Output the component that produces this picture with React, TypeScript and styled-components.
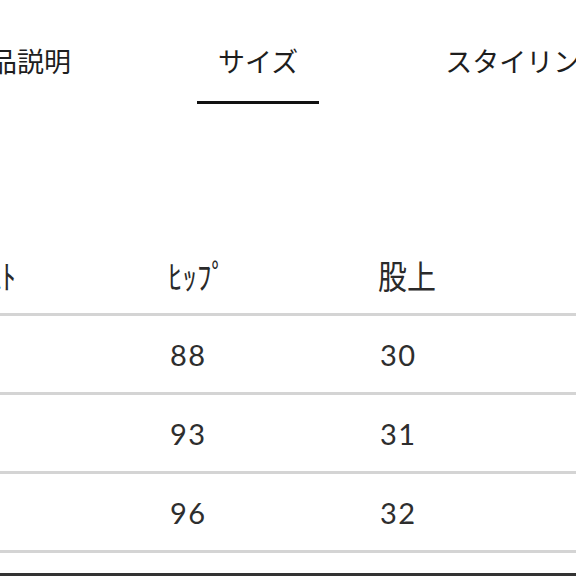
import React from 'react';
import styled, { createGlobalStyle } from 'styled-components';

const GlobalStyle = createGlobalStyle`
  html, body {
    margin: 0;
    padding: 0;
    background: #ffffff;
    overflow: hidden;
  }
  body {
    font-family: "Noto Sans CJK JP", "Noto Sans", sans-serif;
    color: #222;
  }
`;

const tabs = ['商品説明', 'サイズ', 'スタイリング'];

const headers = ['ｳｴｽﾄ', 'ﾋｯﾌﾟ', '股上'];

const rows = [
  ['64', '88', '30'],
  ['68', '93', '31'],
  ['72', '96', '32'],
];

function App() {
  return (
    <Page>
      <GlobalStyle />
      <TabBar>
        {tabs.map((t, i) => (
          <Tab key={t} active={i === 1}>{t}</Tab>
        ))}
      </TabBar>
      <SizeTable>
        <HeadRow>
          {headers.map(h => (
            <HeadCell key={h}>{h}</HeadCell>
          ))}
        </HeadRow>
        {rows.map((r, i) => (
          <Row key={i}>
            {r.map((v, j) => (
              <Cell key={j}>{v}</Cell>
            ))}
          </Row>
        ))}
      </SizeTable>
      <Footer />
    </Page>
  );
}

const Page = styled.div`
  width: 700px;
  margin-left: -42px;
  height: 576px;
  display: flex;
  flex-direction: column;
`;

const TabBar = styled.div`
  display: flex;
  gap: 105px;
  margin-left: -16px;
  white-space: nowrap;
`;

const Tab = styled.div<{ active?: boolean }>`
  font-size: 27px;
  line-height: 40px;
  padding: 41px 21px 20px;
  color: #1e1e1e;
  border-bottom: 3px solid ${p => (p.active ? '#111' : 'transparent')};
`;

const SizeTable = styled.div`
  margin-top: 132px;
  display: flex;
  flex-direction: column;
`;

const HeadRow = styled.div`
  display: grid;
  grid-template-columns: 210px 210px 210px;
  height: 77px;
  align-items: center;
  border-bottom: 3px solid #d4d4d4;
`;

const HeadCell = styled.div`
  font-size: 29px;
  line-height: 1;
  color: #2a2a2a;
  transform: scaleY(1.15);
`;

const Row = styled.div`
  display: grid;
  grid-template-columns: 210px 210px 210px;
  height: 76px;
  align-items: center;
  border-bottom: 3px solid #d4d4d4;
`;

const Cell = styled.div`
  font-family: Lato, "Open Sans", sans-serif;
  font-size: 29px;
  line-height: 1;
  color: #2e2e2e;
  letter-spacing: 1.5px;
  padding-left: 2px;
`;

const Footer = styled.div`
  margin-top: 20px;
  border-top: 3px solid #333;
`;

export default App;
